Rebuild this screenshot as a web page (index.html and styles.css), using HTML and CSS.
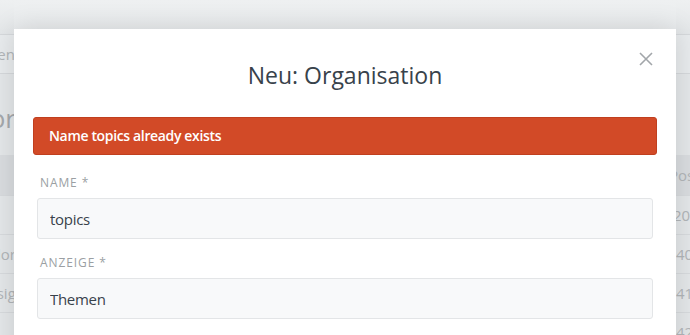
FILE: index.html
```html
<!DOCTYPE html>
<html lang="de">
<head>
  <meta charset="UTF-8" />
  <meta name="viewport" content="width=device-width, initial-scale=1.0" />
  <title>Neu: Organisation</title>
  <link rel="stylesheet" href="styles.css">
</head>
<body>
  <!-- page behind the modal, dimmed -->
  <div class="page">
    <div class="side side-left">
      <div class="top-space"></div>
      <div class="tabbar"><span>Organisationen</span></div>
      <div class="page-title"><span>Organisator</span></div>
      <div class="table-head"></div>
      <div class="row"></div>
      <div class="row"><span>Vendor</span></div>
      <div class="row"><span class="cut">Design</span></div>
      <div class="row"></div>
    </div>
    <div class="side side-right">
      <div class="top-space"></div>
      <div class="tabbar"></div>
      <div class="page-title"></div>
      <div class="table-head"><span class="cut">Postleitzahl</span></div>
      <div class="row"><span class="cut">2001</span></div>
      <div class="row"><span>4020</span></div>
      <div class="row"><span>4111</span></div>
      <div class="row"><span>4200</span></div>
    </div>
  </div>

  <div class="modal">
    <button class="modal-close" type="button" aria-label="Schließen">
      <svg width="14" height="14" viewBox="0 0 14 14">
        <path d="M1 1 L13 13 M13 1 L1 13" stroke="#a2a6aa" stroke-width="1.6" fill="none" />
      </svg>
    </button>
    <h1 class="modal-title">Neu: Organisation</h1>

    <div class="alert">Name topics already exists</div>

    <form class="form">
      <div class="form-group">
        <label for="name">Name *</label>
        <input id="name" type="text" value="topics" />
      </div>
      <div class="form-group">
        <label for="display">Anzeige *</label>
        <input id="display" type="text" value="Themen" />
      </div>
    </form>
  </div>
</body>
</html>
```

FILE: styles.css
```css
html, body {
  height: 100%;
}

body {
  margin: 0;
  font-family: "Open Sans", "Noto Sans", sans-serif;
  background: linear-gradient(#eef0f1 0, #e8ebed 40px, #e4e7e9 120px);
  color: #38424b;
  overflow: hidden;
}

.page {
  display: flex;
  justify-content: space-between;
  height: 100%;
}

.side {
  width: 14px;
  display: flex;
  flex-direction: column;
  overflow: hidden;
  color: #b2b6b9;
  font-size: 15px;
}

.side > div {
  flex-shrink: 0;
  display: flex;
  align-items: center;
}

.side span {
  white-space: nowrap;
}

.side-left > div {
  justify-content: flex-end;
}

.side-right > div {
  justify-content: flex-start;
}

.side-right span {
  margin-left: 0;
}

.side-right span.cut {
  margin-left: -3px;
}

.side-right .table-head span.cut {
  margin-left: -7px;
}

.top-space {
  height: 34px;
  background: linear-gradient(#eef0f1, #e4e7e9);
}

.tabbar {
  height: 38px;
  border-top: 1px solid #d6d9dc;
  border-bottom: 1px solid #d6d9dc;
  background-color: #e9ecee;
}

.tabbar span {
  margin-right: -1px;
}

.page-title {
  height: 81px;
  font-size: 26px;
  color: #a5a9ad;
  background-color: #e5e8ea;
}

.side-left .page-title {
  align-items: flex-end;
  padding-bottom: 19px;
  height: 62px;
}

.page-title span {
  margin-right: -2px;
}

.table-head {
  height: 40px;
  background-color: #dadde0;
}

.row {
  height: 38px;
  border-top: 1px solid #d8dbde;
  background-color: #e5e8ea;
}

.row span {
  margin-right: -2px;
}

.side-left .row span.cut {
  margin-right: -11px;
}

.modal {
  position: absolute;
  top: 29px;
  left: 14px;
  width: 662px;
  bottom: -40px;
  background-color: #fff;
  box-shadow: 0 0 26px rgba(0, 0, 0, 0.14);
  padding: 0 19px;
  box-sizing: border-box;
}

.modal-close {
  position: absolute;
  top: 23px;
  right: 23px;
  border: none;
  background: none;
  padding: 0;
  width: 14px;
  height: 14px;
  cursor: pointer;
  display: flex;
}

.modal-title {
  margin: 0;
  padding: 31px 0 27px;
  text-align: center;
  font-size: 23px;
  font-weight: 400;
  line-height: 30px;
  color: #38424b;
}

.alert {
  background-color: #d24a27;
  border: 1px solid #c03f1f;
  border-radius: 3px;
  color: #fff;
  font-size: 14px;
  font-weight: 600;
  letter-spacing: -0.35px;
  height: 36px;
  line-height: 36px;
  padding: 0 15px;
}

.form {
  padding: 0 4px;
}

.form-group label {
  display: block;
  margin: 21px 0 0 3px;
  height: 22px;
  line-height: 14px;
  font-size: 12px;
  letter-spacing: 0.9px;
  text-transform: uppercase;
  color: #9b9fa3;
}

.form-group + .form-group label {
  margin-top: 17px;
}

.form-group input {
  display: block;
  width: 100%;
  box-sizing: border-box;
  height: 41px;
  padding: 0 12px;
  border: 1px solid #e3e5e7;
  border-radius: 3px;
  background-color: #f8f9fa;
  font-family: inherit;
  font-size: 15px;
  letter-spacing: -0.3px;
  color: #38424b;
}
```
